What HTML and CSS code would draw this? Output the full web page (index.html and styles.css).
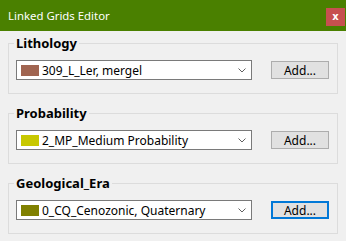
FILE: index.html
```html
<!DOCTYPE html>
<html lang="en">
<head>
  <meta charset="UTF-8">
  <title>Linked Grids Editor</title>
  <link rel="stylesheet" href="styles.css">
</head>
<body>

  <div class="titlebar">
    <span class="title">Linked Grids Editor</span>
    <button class="close">x</button>
  </div>

  <div class="content">

    <fieldset class="group">
      <legend>Lithology</legend>
      <div class="row">
        <div class="combo">
          <span class="swatch" style="background: #a06450"></span>
          <span class="value">309_L_Ler, mergel</span>
          <svg class="arrow" width="8" height="5" viewBox="0 0 8 5"><path d="M0.5 0.5 L4 4 L7.5 0.5" fill="none" stroke="#606060" stroke-width="1"/></svg>
        </div>
        <button class="add">Add...</button>
      </div>
    </fieldset>

    <fieldset class="group">
      <legend>Probability</legend>
      <div class="row">
        <div class="combo">
          <span class="swatch" style="background: #c8c800"></span>
          <span class="value">2_MP_Medium Probability</span>
          <svg class="arrow" width="8" height="5" viewBox="0 0 8 5"><path d="M0.5 0.5 L4 4 L7.5 0.5" fill="none" stroke="#606060" stroke-width="1"/></svg>
        </div>
        <button class="add">Add...</button>
      </div>
    </fieldset>

    <fieldset class="group">
      <legend>Geological_Era</legend>
      <div class="row">
        <div class="combo">
          <span class="swatch" style="background: #808000"></span>
          <span class="value">0_CQ_Cenozonic, Quaternary</span>
          <svg class="arrow" width="8" height="5" viewBox="0 0 8 5"><path d="M0.5 0.5 L4 4 L7.5 0.5" fill="none" stroke="#606060" stroke-width="1"/></svg>
        </div>
        <button class="add focused">Add...</button>
      </div>
    </fieldset>

  </div>

</body>
</html>
```

FILE: styles.css
```css
body {
  margin: 0;
  background: #f0f0f0;
  font-family: "Noto Sans", "Open Sans", sans-serif;
  font-size: 12px;
  color: #000;
}
.titlebar {
  height: 31px;
  background: #4a8000;
  display: flex;
  align-items: center;
  justify-content: space-between;
  padding: 0 1px 0 8px;
  box-sizing: border-box;
}
.title {
  color: #fff;
  font-size: 11.4px;
  margin-top: -1px;
}
.close {
  width: 19px;
  height: 18px;
  margin-top: 3px;
  border: none;
  padding: 0;
  background: #c75050;
  color: #fff;
  font-family: "DejaVu Sans", sans-serif;
  font-weight: bold;
  font-size: 10px;
  line-height: 18px;
}
.content {
  padding-top: 4px;
}
.group {
  margin: 0 8px 11px;
  padding: 9px 8px 13px 7px;
  border: 1px solid #dcdcdc;
}
.group legend {
  font-weight: bold;
  font-size: 13px;
  line-height: 16px;
  padding: 0 2px;
  margin-left: -2px;
}
.row {
  display: flex;
  align-items: center;
  justify-content: space-between;
}
.combo {
  width: 236px;
  height: 20px;
  box-sizing: border-box;
  border: 1px solid #7a7a7a;
  background: #fff;
  display: flex;
  align-items: center;
  padding: 0 5px 0 4px;
}
.swatch {
  width: 18px;
  height: 11px;
  margin-right: 3px;
  flex: none;
}
.value {
  flex: 1;
  white-space: nowrap;
}
.arrow {
  flex: none;
}
.add {
  width: 58px;
  height: 18px;
  box-sizing: border-box;
  border: 1px solid #adadad;
  background: #e1e1e1;
  font-family: inherit;
  font-size: 12px;
  padding: 0;
  line-height: 15px;
}
.add.focused {
  border: 2px solid #0078d7;
}
```
